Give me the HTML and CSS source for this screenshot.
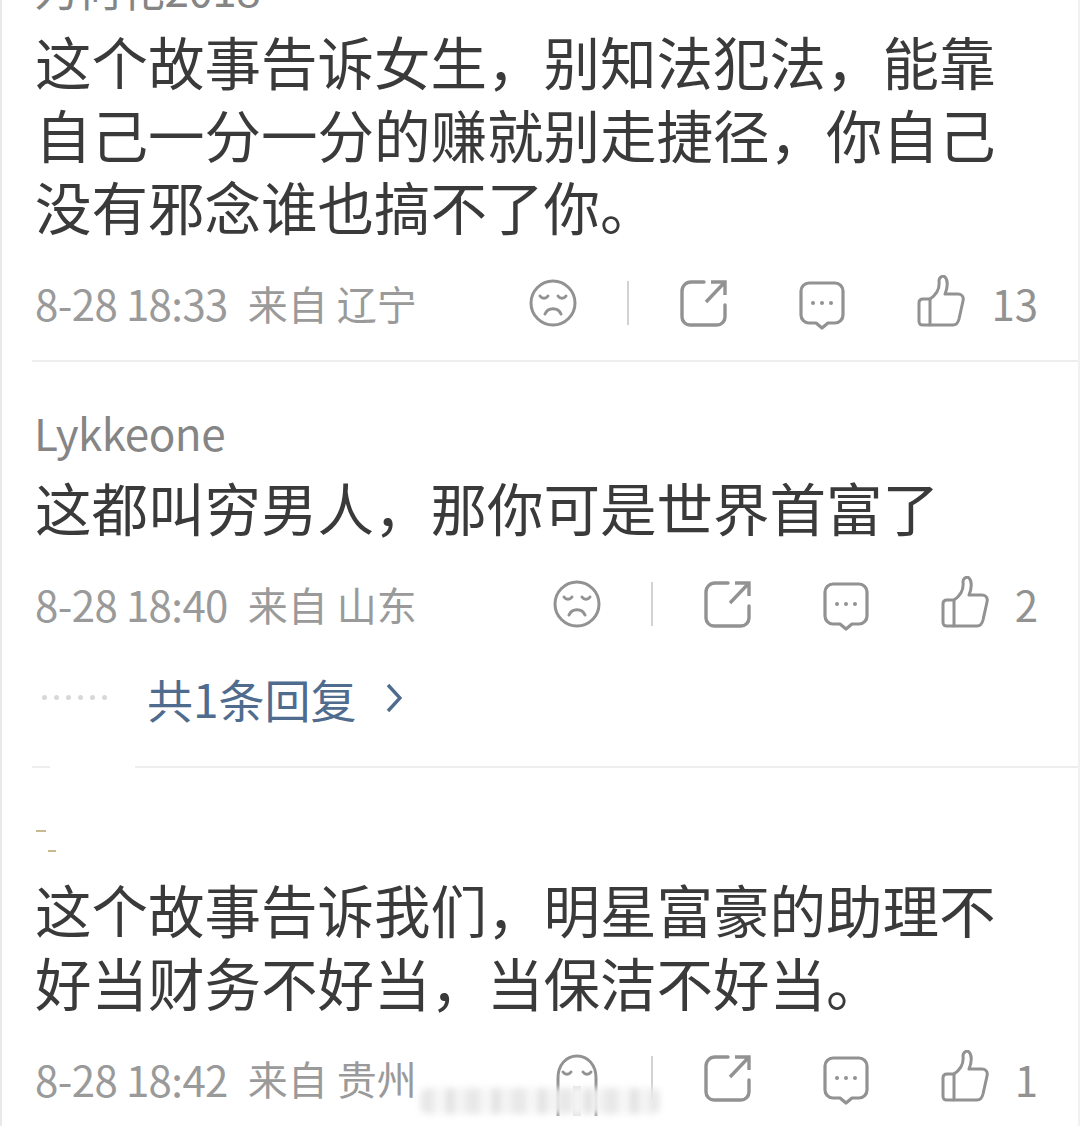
FILE: index.html
```html
<!DOCTYPE html>
<html lang="zh-CN">
<head>
<meta charset="utf-8">
<title>评论</title>
<link rel="stylesheet" href="styles.css">
</head>
<body>
<svg class="defs" width="0" height="0" aria-hidden="true">
  <symbol id="i-sad" viewBox="0 0 48 48">
    <circle cx="24" cy="24" r="22" fill="none" stroke="currentColor" stroke-width="3"/>
    <path d="M11 17c2 3 6 3 8 0M29 17c2 3 6 3 8 0M16 35c3-7 13-7 16 0" fill="none" stroke="currentColor" stroke-width="3" stroke-linecap="round"/>
  </symbol>
  <symbol id="i-ghost" viewBox="0 0 48 64">
    <path d="M5 62V24C5 11 13 2 24 2s19 9 19 22v38" fill="none" stroke="currentColor" stroke-width="3"/>
    <path d="M10 18c2 3 6 3 8 0M30 18c2 3 6 3 8 0" fill="none" stroke="currentColor" stroke-width="3" stroke-linecap="round"/>
    <path d="M20 32h8v30h-8z" fill="currentColor" opacity=".25"/>
  </symbol>
  <symbol id="i-share" viewBox="0 0 48 48">
    <path d="M25 3H12a9 9 0 0 0-9 9v26a8 8 0 0 0 8 8h27a8 8 0 0 0 8-8V26" fill="none" stroke="currentColor" stroke-width="3.4" stroke-linecap="round"/>
    <path d="M27 23 46 3M32 3h14v13" fill="none" stroke="currentColor" stroke-width="3.4"/>
  </symbol>
  <symbol id="i-comment" viewBox="0 0 48 50">
    <path d="M11 3h26a8 8 0 0 1 8 8v24a8 8 0 0 1-8 8h-7l-6 5-6-5h-7a8 8 0 0 1-8-8V11a8 8 0 0 1 8-8z" fill="none" stroke="currentColor" stroke-width="3.2" stroke-linejoin="round"/>
    <circle cx="15" cy="23" r="2" fill="currentColor"/><circle cx="24" cy="23" r="2" fill="currentColor"/><circle cx="33" cy="23" r="2" fill="currentColor"/>
  </symbol>
  <symbol id="i-like" viewBox="0 0 48 52">
    <path d="M13 50V24c6-4 10-10 9-18 0-4 4-6 6-4 3 3 3 10 0 17h13c4 0 6 3 5 7l-4 18c-1 4-3 6-6 6z" fill="none" stroke="currentColor" stroke-width="3" stroke-linejoin="round"/>
    <path d="M13 24H6c-3 0-4 2-4 4v18c0 3 1 4 4 4h7" fill="none" stroke="currentColor" stroke-width="3"/>
  </symbol>
</svg>

<main class="page">
  <article class="comment first">
    <div class="name clipped">为何花2018</div>
    <p class="body">这个故事告诉女生，别知法犯法，能靠<br>自己一分一分的赚就别走捷径，你自己<br>没有邪念谁也搞不了你。</p>
    <div class="meta">
      <span class="stamp">8-28 18:33</span><span class="place">来自 辽宁</span>
      <div class="actions">
        <svg class="ic"><use href="#i-sad"/></svg><i class="sep"></i>
        <svg class="ic share"><use href="#i-share"/></svg>
        <svg class="ic talk"><use href="#i-comment"/></svg>
        <svg class="ic like"><use href="#i-like"/></svg><span class="count">13</span>
      </div>
    </div>
  </article>
  <article class="comment">
    <div class="name">Lykkeone</div>
    <p class="body single">这都叫穷男人，那你可是世界首富了</p>
    <div class="meta">
      <span class="stamp">8-28 18:40</span><span class="place">来自 山东</span>
      <div class="actions">
        <svg class="ic"><use href="#i-sad"/></svg><i class="sep"></i>
        <svg class="ic share"><use href="#i-share"/></svg>
        <svg class="ic talk"><use href="#i-comment"/></svg>
        <svg class="ic like"><use href="#i-like"/></svg><span class="count">2</span>
      </div>
    </div>
    <div class="replies">
      <span class="dots"><b></b><b></b><b></b><b></b><b></b><b></b></span>
      <span class="reply-text">共1条回复</span>
      <svg class="chev" viewBox="0 0 16 30"><path d="M2 2l12 13L2 28" fill="none" stroke="currentColor" stroke-width="3.4"/></svg>
    </div>
    <i class="patch"></i>
  </article>
  <article class="comment last">
    <div class="name erased"><i class="speck a"></i><i class="speck b"></i></div>
    <p class="body">这个故事告诉我们，明星富豪的助理不<br>好当财务不好当，当保洁不好当。</p>
    <div class="meta">
      <span class="stamp">8-28 18:42</span><span class="place">来自 贵州</span>
      <div class="actions">
        <svg class="ic ghost"><use href="#i-ghost"/></svg><i class="sep"></i>
        <svg class="ic share"><use href="#i-share"/></svg>
        <svg class="ic talk"><use href="#i-comment"/></svg>
        <svg class="ic like"><use href="#i-like"/></svg><span class="count">1</span>
      </div>
    </div>
  </article>
  <div class="watermark"></div>
</main>
</body>
</html>
```
FILE: styles.css
```css
html, body { margin: 0; padding: 0; background: #fff; }
body { width: 1080px; height: 1126px; overflow: hidden; font-family: "Noto Sans CJK SC", "Noto Sans", sans-serif; }
.defs { position: absolute; }
.page { position: relative; box-sizing: border-box; width: 1080px; height: 1126px; overflow: hidden; border-left: 2px solid #e9e9e9; border-right: 2px solid #f1f1f1; }
.comment { position: relative; margin-left: 30px; border-bottom: 2px solid #eeeeee; }
.comment.first { height: 360px; margin-top: 0; }
.comment:nth-child(2) { height: 406px; padding-top: 40px; box-sizing: border-box; }
.comment.last { border-bottom: 0; padding-top: 58px; }
.name { height: 60px; font-size: 44px; line-height: 60px; color: #858585; letter-spacing: -0.5px; margin-left: 2px; }
.name.clipped { height: 24px; line-height: 24px; position: relative; top: -24px; overflow: visible; }
.name.erased { height: 46px; position: relative; }
.speck { position: absolute; height: 2px; background: #c9b98f; }
.speck.a { left: 2px; top: 4px; width: 10px; }
.speck.b { left: 14px; top: 24px; width: 8px; }
.body { margin: 0 0 0 3px; font-size: 56.5px; line-height: 72.5px; color: #3a3a3a; white-space: nowrap; }
.body.single { margin-top: 8px; }
.meta { display: flex; align-items: center; height: 60px; margin-top: 31px; margin-left: 3px; font-size: 40px; color: #9a9a9a; white-space: nowrap; }
.stamp { font-size: 42px; letter-spacing: -0.6px; }
.place { margin-left: 20px; }
.actions { display: flex; align-items: center; margin-left: auto; margin-right: 40px; }
.ic { width: 48px; height: 48px; color: #929292; display: block; }
.ghost { height: 64px; margin-top: 16px; }
.sep { display: block; width: 2px; height: 44px; margin: 0 50px 0 50px; background: #d2d2d2; }
.talk { margin-left: 71px; height: 50px; margin-top: 4px; }
.like { margin-left: 71px; height: 52px; margin-top: -4px; }
.count { margin-left: 26px; font-size: 42px; color: #929292; }
.replies { display: flex; align-items: center; height: 60px; margin-top: 34px; color: #4f6c8e; }
.dots { display: flex; gap: 7px; margin-left: 10px; width: 105px; }
.dots b { width: 5px; height: 5px; border-radius: 50%; background: #d8d8d8; }
.reply-text { font-size: 46px; line-height: 60px; }
.chev { width: 16px; height: 30px; margin-left: 29px; }
.patch { position: absolute; left: 18px; bottom: -2px; width: 85px; height: 2px; background: #fff; }
.watermark { position: absolute; left: 418px; top: 1088px; width: 240px; height: 26px; background: repeating-linear-gradient(90deg, #e6e6e6 0 14px, #f6f6f6 14px 26px, #dfdfdf 26px 34px, #f3f3f3 34px 46px); filter: blur(3px); opacity: .9; border-radius: 8px; }
```
